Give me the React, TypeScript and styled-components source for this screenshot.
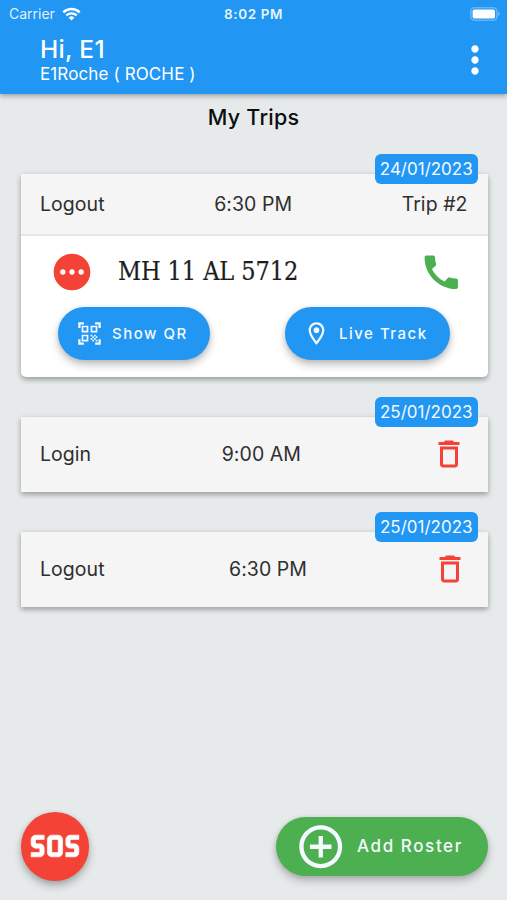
import React from 'react';
import styled, { createGlobalStyle } from 'styled-components';
import {
  MdAddCircleOutline,
  MdCall,
  MdDeleteOutline,
  MdMoreVert,
  MdOutlineLocationOn,
  MdPending,
  MdQrCodeScanner,
  MdSos,
} from 'react-icons/md';

const BLUE = '#2196f3';
const RED = '#f44336';
const GREEN = '#4caf50';

const GlobalStyle = createGlobalStyle`
  *, *::before, *::after { box-sizing: border-box; }
  body {
    margin: 0;
    background: #e6eaeb;
    font-family: Inter, Roboto, sans-serif;
  }
  button {
    border: 0;
    margin: 0;
    font-family: inherit;
    cursor: pointer;
  }
  svg { display: block; flex: none; }
`;

const Screen = styled.div`
  display: flex;
  flex-direction: column;
  width: 507px;
  height: 900px;
  overflow: hidden;
  background: #e6eaeb;
`;

const Header = styled.header`
  flex: none;
  height: 94px;
  background: ${BLUE};
  color: #fff;
  box-shadow: 0 2px 5px rgba(0, 0, 0, 0.32);
`;

const StatusBar = styled.div`
  display: grid;
  grid-template-columns: 1fr auto 1fr;
  align-items: center;
  height: 28px;
  padding: 0 6px 0 9px;
`;

const Carrier = styled.div`
  display: flex;
  align-items: center;
  gap: 7px;
  font-size: 14px;
  line-height: 28px;
  color: rgba(255, 255, 255, 0.88);
`;

const Clock = styled.div`
  margin-left: -3px;
  font-size: 13.5px;
  font-weight: 600;
  letter-spacing: 0.6px;
  color: rgba(255, 255, 255, 0.92);
`;

const BatterySlot = styled.div`
  justify-self: end;
`;

const AppBar = styled.div`
  display: flex;
  justify-content: space-between;
  padding: 7px 10px 0 40px;
`;

const Greeting = styled.h1`
  margin: 0;
  font-size: 24.5px;
  font-weight: 500;
  line-height: 29px;
  letter-spacing: 0.3px;
`;

const Account = styled.div`
  font-size: 17px;
  line-height: 20px;
  letter-spacing: 0.12px;
`;

const MenuButton = styled.button`
  display: flex;
  height: 44px;
  padding: 0;
  margin-top: 2.5px;
  background: none;
  color: #fff;
`;

const PageTitle = styled.h2`
  margin: 8px 0 0;
  height: 30px;
  font-size: 21.5px;
  font-weight: 500;
  line-height: 30px;
  letter-spacing: 0.25px;
  text-align: center;
  color: #0c0e0f;
`;

const TripList = styled.main`
  display: flex;
  flex-direction: column;
  gap: 39.5px;
  padding: 41.6px 19.5px 0 20.5px;
`;

const Card = styled.section<{ $rounded?: boolean }>`
  position: relative;
  background: #fff;
  border-radius: ${(p) => (p.$rounded ? '0 0 5px 5px' : '0')};
  box-shadow: 0 3px 5px rgba(0, 0, 0, 0.24), 0 1px 6px rgba(0, 0, 0, 0.12);
`;

const DateBadge = styled.div`
  position: absolute;
  top: -20px;
  right: 9.5px;
  width: 103.5px;
  height: 30.5px;
  border-radius: 6px;
  background: ${BLUE};
  color: #f4faff;
  font-size: 17px;
  line-height: 30.5px;
  text-align: center;
`;

const Summary = styled.div<{ $tall?: boolean }>`
  display: flex;
  align-items: center;
  justify-content: space-between;
  height: ${(p) => (p.$tall ? '75.5px' : '60.8px')};
  padding: 0 20px 0 19.5px;
  background: #f5f5f5;
  color: #2f2f2f;
  font-size: 19.5px;
  letter-spacing: 0.05px;
`;

const Details = styled.div`
  height: 142.8px;
  border-top: 2px solid #e6e7e7;
`;

const VehicleRow = styled.div`
  display: flex;
  align-items: center;
  padding: 13px 24.5px 0 29px;
  height: 57.8px;
`;

const Plate = styled.div`
  flex: 1;
  padding-left: 24.5px;
  font-family: 'DejaVu Serif Condensed', 'DejaVu Serif', serif;
  font-stretch: condensed;
  font-size: 26.5px;
  line-height: 32px;
  letter-spacing: -0.1px;
  white-space: nowrap;
  color: #1d1d1d;

  span {
    display: inline-block;
    transform: translateY(-1px) scaleX(0.945);
    transform-origin: left center;
    -webkit-text-stroke: 0.2px #1d1d1d;
  }
`;

const StatusIcon = styled(MdPending)`
  color: ${RED};
`;

const CallIcon = styled(MdCall)`
  color: ${GREEN};
`;

const TrashIcon = styled(MdDeleteOutline)`
  color: ${RED};
`;

const Actions = styled.div`
  display: flex;
  justify-content: space-between;
  padding: 12.8px 38px 0 37.5px;
`;

const Pill = styled.button<{ $width: number }>`
  display: flex;
  align-items: center;
  gap: 9.5px;
  width: ${(p) => p.$width}px;
  height: 53px;
  padding: 0 0 0 17.5px;
  border-radius: 27px;
  background: ${BLUE};
  color: #f4faff;
  font-size: 15px;
  font-weight: 550;
  letter-spacing: 1.5px;
  white-space: nowrap;
  box-shadow: 0 5px 8px rgba(0, 0, 0, 0.22), 0 1px 5px rgba(0, 0, 0, 0.12);
`;

const Footer = styled.footer`
  display: flex;
  align-items: center;
  justify-content: space-between;
  margin-top: auto;
  padding: 0 19.5px 19.5px 20.5px;
`;

const SosButton = styled.button`
  display: flex;
  align-items: center;
  justify-content: center;
  width: 68.5px;
  height: 68.5px;
  padding: 0;
  border-radius: 50%;
  background: ${RED};
  color: #fff;
  box-shadow: 0 5px 8px rgba(0, 0, 0, 0.24), 0 1px 5px rgba(0, 0, 0, 0.12);

  path:last-child {
    stroke: #fff;
    stroke-width: 0.3px;
  }
`;

const AddButton = styled(Pill)`
  gap: 10.5px;
  height: 59px;
  padding-left: 19px;
  border-radius: 30px;
  background: ${GREEN};
  font-size: 17px;
  letter-spacing: 1.6px;
`;

const WifiIcon = () => (
  <svg width="19" height="14" viewBox="0 0 19 14" fill="none" stroke="#fff">
    <path d="M1.3 5.3a11.8 11.8 0 0 1 16.4 0" strokeWidth="2.5" />
    <path d="M4.3 8.4a7.5 7.5 0 0 1 10.4 0" strokeWidth="2.3" />
    <path d="M9.5 13.6l-2.8-2.9a4 4 0 0 1 5.6 0z" fill="#fff" stroke="none" />
  </svg>
);

const BatteryIcon = () => (
  <svg width="31" height="14" viewBox="0 0 31 14">
    <rect x="0.9" y="0.8" width="26" height="12.4" rx="3.6" fill="none" stroke="#fff" strokeOpacity="0.3" strokeWidth="1.6" />
    <rect x="2.6" y="2.5" width="22.4" height="9" rx="1.8" fill="#fff" />
    <path d="M28.3 4.8c1.9.7 1.9 3.7 0 4.4z" fill="#fff" fillOpacity="0.4" />
  </svg>
);

export default function App() {
  return (
    <Screen>
      <GlobalStyle />
      <Header>
        <StatusBar>
          <Carrier>
            Carrier
            <WifiIcon />
          </Carrier>
          <Clock>8:02 PM</Clock>
          <BatterySlot>
            <BatteryIcon />
          </BatterySlot>
        </StatusBar>
        <AppBar>
          <div>
            <Greeting>Hi, E1</Greeting>
            <Account>E1Roche ( ROCHE )</Account>
          </div>
          <MenuButton aria-label="Menu">
            <MdMoreVert size={44} />
          </MenuButton>
        </AppBar>
      </Header>

      <PageTitle>My Trips</PageTitle>

      <TripList>
        <Card $rounded>
          <DateBadge>24/01/2023</DateBadge>
          <Summary>
            <span>Logout</span>
            <span>6:30 PM</span>
            <span>Trip #2</span>
          </Summary>
          <Details>
            <VehicleRow>
              <StatusIcon size={44} />
              <Plate>
                <span>MH 11 AL 5712</span>
              </Plate>
              <CallIcon size={44.5} />
            </VehicleRow>
            <Actions>
              <Pill $width={152}>
                <MdQrCodeScanner size={27} />
                Show QR
              </Pill>
              <Pill $width={164.5}>
                <MdOutlineLocationOn size={27} />
                Live Track
              </Pill>
            </Actions>
          </Details>
        </Card>

        <Card>
          <DateBadge>25/01/2023</DateBadge>
          <Summary $tall>
            <span>Login</span>
            <span>9:00 AM</span>
            <TrashIcon size={36} />
          </Summary>
        </Card>

        <Card>
          <DateBadge>25/01/2023</DateBadge>
          <Summary $tall>
            <span>Logout</span>
            <span>6:30 PM</span>
            <TrashIcon size={36} />
          </Summary>
        </Card>
      </TripList>

      <Footer>
        <SosButton aria-label="SOS">
          <MdSos size={52} />
        </SosButton>
        <AddButton $width={211.5}>
          <MdAddCircleOutline size={51.5} />
          Add Roster
        </AddButton>
      </Footer>
    </Screen>
  );
}
